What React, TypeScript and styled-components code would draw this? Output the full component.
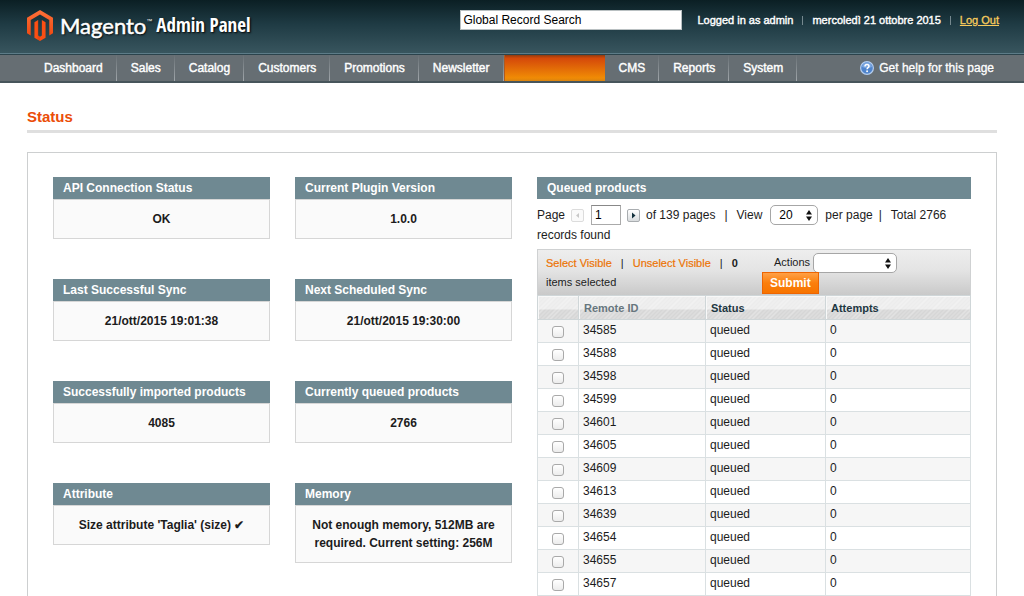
import React from "react";
import styled, { createGlobalStyle, css } from "styled-components";

const GlobalStyle = createGlobalStyle`
  *, *::before, *::after { box-sizing: border-box; }
  body {
    margin: 0;
    background: #fff;
    color: #1c1c1c;
    font: 12px/18px "Liberation Sans", Arial, sans-serif;
  }
  button, input, select { font-family: inherit; margin: 0; }
`;

const Page = styled.div`
  display: flex;
  flex-direction: column;
  min-height: 100vh;
`;

/* ---------- header ---------- */

const Header = styled.header`
  display: flex;
  justify-content: space-between;
  align-items: flex-start;
  height: 55px;
  padding: 10px 25px 0 27px;
  background: linear-gradient(#0b1f24, #1f3b44 45%, #39565f);
  border-bottom: 1px solid #2b434c;
  box-shadow: inset 0 -1px #5d7c88;
`;

const Brand = styled.a`
  display: flex;
  align-items: center;
  height: 31px;
  color: #fff;
  text-decoration: none;
  text-shadow: 1px 1px 2px #000;
`;

const BrandName = styled.span`
  margin-left: 7px;
  font: 22px/31px Lato, sans-serif;
  -webkit-text-stroke: 0.5px #fff;
`;

const Trademark = styled.span`
  align-self: flex-start;
  margin-top: 6px;
  font-size: 6px;
  line-height: 10px;
`;

const BrandSection = styled.span`
  margin-left: 4px;
  font: bold 19px/31px "Liberation Sans Narrow", "Open Sans Condensed", "Liberation Sans", sans-serif;
`;

const HeaderTools = styled.div`
  display: flex;
  align-items: center;
  height: 20px;
  color: #fff;
  font-size: 11px;
`;

const SearchInput = styled.input`
  width: 222px;
  height: 20px;
  margin-right: 15px;
  padding: 0 2px;
  border: 1px solid #b9c0c2;
  border-radius: 0;
  background: #fff;
  color: #000;
  font-size: 12px;
`;

const Strong = styled.span`
  -webkit-text-stroke: 0.4px currentColor;
`;

const HeaderDivider = styled.span`
  width: 1px;
  height: 9px;
  margin: 0 9px;
  background: #76898f;
`;

const LogOut = styled.a`
  color: #f8cc5c;
  -webkit-text-stroke: 0.3px currentColor;
`;

/* ---------- navigation ---------- */

const Nav = styled.nav`
  display: flex;
  justify-content: space-between;
  height: 28px;
  padding: 0 30px;
  background: #666e73;
  border-bottom: 2px solid #47555b;
`;

const NavList = styled.ul`
  display: flex;
  margin: 0;
  padding: 0;
  list-style: none;
`;

const NavItem = styled.li<{ $active?: boolean }>`
  display: flex;
  border-right: 1px solid;
  border-image: linear-gradient(#666e73, #a3a9ad) 1;
  ${(p) =>
    p.$active &&
    css`
      width: 101px;
      border: 0;
      background: linear-gradient(#8f3c10, #d4480a 12%, #f08b05 88%, #d98310);
      box-shadow: inset 1px 0 #b05a20;
    `}
`;

const NavLink = styled.a`
  flex: 1;
  padding: 0 13px 0 14px;
  color: #fff;
  line-height: 26px;
  text-decoration: none;
  -webkit-text-stroke: 0.4px #fff;
`;

const HelpLink = styled.a`
  display: flex;
  align-items: center;
  gap: 5px;
  color: #fff;
  line-height: 26px;
  text-decoration: none;
  -webkit-text-stroke: 0.3px #fff;
`;

/* ---------- content ---------- */

const Main = styled.main`
  display: flex;
  flex: 1;
  flex-direction: column;
  padding: 24px 27px 0;
`;

const Title = styled.h1`
  margin: 0 0 19px;
  padding-bottom: 3px;
  border-bottom: 3px solid #dfdfdf;
  color: #eb4d08;
  font-size: 15px;
  line-height: 20px;
`;

const Panel = styled.div`
  display: grid;
  flex: 1;
  grid-template-columns: minmax(0, 1fr) minmax(0, 1fr) minmax(0, 2fr);
  gap: 25px;
  padding: 24px 25px 0;
  border: 1px solid #cdcfd0;
  border-bottom: 0;
`;

const CardColumn = styled.div`
  display: flex;
  flex-direction: column;
  gap: 40px;
`;

const SectionHead = styled.h2`
  margin: 0;
  padding: 0 10px;
  background: #6f8992;
  color: #fff;
  font-size: 12px;
  line-height: 22px;
`;

const CardBody = styled.div`
  padding: 10px 15px;
  border: 1px solid #d6d6d6;
  background: #fafafa;
  font-weight: bold;
  text-align: center;
`;

/* ---------- queue grid ---------- */

const Pager = styled.div`
  display: flex;
  flex-wrap: wrap;
  align-items: center;
  padding: 6px 0 4px;
  line-height: 20px;
`;

const PageButton = styled.button`
  width: 13px;
  height: 13px;
  padding: 0;
  border: 1px solid #a9adb0;
  border-radius: 2px;
  background: linear-gradient(#fff, #d9dcde);
  line-height: 0;
  color: #12303c;
  &:disabled {
    border-color: #dcdcdc;
    background: #fafafa;
    color: #c8c8c8;
  }
`;

const PageInput = styled.input`
  width: 30px;
  height: 20px;
  margin: 0 6px 0 7px;
  padding: 0 3px;
  border: 1px solid #aaa;
  border-top-color: #888;
  border-radius: 0;
  font-size: 12px;
`;

const PageLabel = styled.label`
  margin-right: 6px;
`;

const Divider = styled.span`
  margin: 0 9px;
`;

const PageCount = styled.span`
  margin-left: 6px;
`;

const Limit = styled.label`
  margin-right: 8px;
`;

const PerPage = styled.span`
  margin: 0 -3px 0 7px;
`;

const SelectBox = styled.span<{ $width: number }>`
  display: grid;
  width: ${(p) => p.$width}px;
  height: 20px;
  > * { grid-area: 1 / 1; }
  > svg {
    align-self: center;
    justify-self: end;
    margin-right: 6px;
    pointer-events: none;
  }
`;

const Select = styled.select`
  appearance: none;
  width: 100%;
  padding: 0 8px;
  border: 1px solid #a6a6a6;
  border-radius: 5px;
  background: #fff;
  color: #000;
  font-size: 12px;
`;

const MassAction = styled.div`
  display: flex;
  height: 46px;
  padding: 3px 8px 0;
  border: 1px solid #cfd1d2;
  border-bottom: 0;
  background: linear-gradient(#eeeeee, #e4e4e4 45%, #c9c9c9);
  font-size: 11px;
`;

const Selection = styled.div`
  display: flex;
  flex-wrap: wrap;
  align-content: flex-start;
  width: 216px;
  padding-top: 1px;
  line-height: 19px;
`;

const Toggle = styled.a`
  color: #ec7405;
  text-decoration: none;
  -webkit-text-stroke: 0.2px currentColor;
`;

const FullLine = styled.span`
  flex-basis: 100%;
`;

const ActionForm = styled.form`
  display: flex;
  flex-direction: column;
  align-items: flex-start;
`;

const ActionField = styled.div`
  display: flex;
  gap: 3px;
  height: 19px;
  padding-left: 12px;
`;

const Submit = styled.button`
  height: 22px;
  padding: 0 7px;
  border: 1px solid #ed6502;
  background: linear-gradient(#ffa046, #fb7f0c 50%, #f77400);
  color: #fff;
  font-size: 12px;
  font-weight: bold;
  line-height: 18px;
`;

const Table = styled.table`
  width: 100%;
  table-layout: fixed;
  border-collapse: collapse;
  border: 1px solid #cfd6d8;
`;

const HeadCell = styled.th<{ $muted?: boolean; $width?: string }>`
  width: ${(p) => p.$width ?? "auto"};
  height: 24px;
  padding: 0 5px;
  border: 1px solid #cfd6d8;
  background:
    repeating-linear-gradient(135deg, rgba(255, 255, 255, 0.35) 0 1px, transparent 1px 3px),
    linear-gradient(#ececec 55%, #d6d6d6 55%);
  box-shadow: inset 1px 1px #f8f8f8;
  color: ${(p) => (p.$muted ? "#67767e" : "#1e3742")};
  font-size: 11px;
  text-align: left;
`;

const Row = styled.tr`
  background: #fff;
  &:nth-child(odd) { background: #f6f6f6; }
`;

const Cell = styled.td<{ $center?: boolean }>`
  height: 23px;
  padding: 0 4px 2px;
  border: 1px solid #dae0e2;
  text-align: ${(p) => (p.$center ? "center" : "left")};
  line-height: 20px;
`;

const Checkbox = styled.input`
  appearance: none;
  display: block;
  width: 12px;
  height: 12px;
  margin: 3px auto 0;
  border: 1px solid #a9a9a9;
  border-radius: 3px;
  background: linear-gradient(#fff, #ececec);
  &:checked { background: #6f8992; }
`;

const navBefore = ["Dashboard", "Sales", "Catalog", "Customers", "Promotions", "Newsletter"];
const navAfter = ["CMS", "Reports", "System"];

const cardColumns = [
  [
    ["API Connection Status", "OK"],
    ["Last Successful Sync", "21/ott/2015 19:01:38"],
    ["Successfully imported products", "4085"],
    ["Attribute", "Size attribute 'Taglia' (size) ✔"],
  ],
  [
    ["Current Plugin Version", "1.0.0"],
    ["Next Scheduled Sync", "21/ott/2015 19:30:00"],
    ["Currently queued products", "2766"],
    ["Memory", "Not enough memory, 512MB are required. Current setting: 256M"],
  ],
];

const queue = [
  34585, 34588, 34598, 34599, 34601, 34605, 34609, 34613, 34639, 34654, 34655, 34657,
].map((id) => ({ id, status: "queued", attempts: 0 }));

const Logo = () => (
  <svg width="26" height="31" viewBox="1.6 0 20.8 24" preserveAspectRatio="none" aria-hidden="true">
    <defs>
      <linearGradient id="flame" x1="0" y1="0" x2="0" y2="1">
        <stop offset="0" stopColor="#ff7038" />
        <stop offset="1" stopColor="#f04a12" />
      </linearGradient>
    </defs>
    <path
      fill="url(#flame)"
      d="M22.391 6v12l-2.969 1.714V7.713L12 3.43 4.574 7.713v12.001L1.609 18V6L12 0l10.391 6z"
    />
    <path
      fill="#fb4f14"
      d="M12 24l-4.455-2.572v-12l2.97-1.715v12.001l1.485.902 1.485-.902V7.713l2.971 1.715v12L12 24z"
    />
    <path fill="#c93a0c" d="M10.515 7.713v12.001l1.485.902V24l-1.9-1.1V8z" opacity="0.35" />
  </svg>
);

const HelpIcon = () => (
  <svg width="14" height="14" viewBox="0 0 14 14" aria-hidden="true">
    <circle cx="7" cy="7" r="6.4" fill="#4f84cc" stroke="#b4cdee" strokeWidth="1.2" />
    <path d="M2 6a5 4.4 0 0 1 10 0q-5 2-10 0z" fill="#7ba6df" />
    <path
      d="M5 5.4C5 4.2 5.9 3.5 7 3.5s2 .7 2 1.8c0 1.3-1.9 1.4-1.9 2.9"
      fill="none"
      stroke="#fff"
      strokeWidth="1.5"
    />
    <circle cx="7.1" cy="10.2" r="0.95" fill="#fff" />
  </svg>
);

const UpDown = () => (
  <svg width="6" height="11" viewBox="0 0 6 11" aria-hidden="true">
    <path d="M3 0l3 4.5H0zM3 11l3-4.5H0z" fill="#111" />
  </svg>
);

const Arrow = ({ left }: { left?: boolean }) => (
  <svg width="11" height="11" viewBox="0 0 11 11" aria-hidden="true">
    <path d={left ? "M7 3v5L4 5.5z" : "M4 2.5v6l3.5-3z"} fill="currentColor" />
  </svg>
);

export default function App() {
  return (
    <Page>
      <GlobalStyle />
      <Header>
        <Brand href="#">
          <Logo />
          <BrandName>Magento</BrandName>
          <Trademark>™</Trademark>
          <BrandSection>Admin Panel</BrandSection>
        </Brand>
        <HeaderTools>
          <SearchInput aria-label="Search" defaultValue="Global Record Search" />
          <Strong>Logged in as admin</Strong>
          <HeaderDivider />
          <Strong>mercoledì 21 ottobre 2015</Strong>
          <HeaderDivider />
          <LogOut href="#">Log Out</LogOut>
        </HeaderTools>
      </Header>
      <Nav>
        <NavList>
          {navBefore.map((label) => (
            <NavItem key={label}>
              <NavLink href="#">{label}</NavLink>
            </NavItem>
          ))}
          <NavItem $active />
          {navAfter.map((label) => (
            <NavItem key={label}>
              <NavLink href="#">{label}</NavLink>
            </NavItem>
          ))}
        </NavList>
        <HelpLink href="#">
          <HelpIcon />
          Get help for this page
        </HelpLink>
      </Nav>
      <Main>
        <Title>Status</Title>
        <Panel>
          {cardColumns.map((cards, i) => (
            <CardColumn key={i}>
              {cards.map(([title, value]) => (
                <section key={title}>
                  <SectionHead>{title}</SectionHead>
                  <CardBody>{value}</CardBody>
                </section>
              ))}
            </CardColumn>
          ))}
          <section>
            <SectionHead>Queued products</SectionHead>
            <Pager>
              <PageLabel htmlFor="page">Page</PageLabel>
              <PageButton type="button" disabled aria-label="Previous page">
                <Arrow left />
              </PageButton>
              <PageInput id="page" defaultValue="1" />
              <PageButton type="button" aria-label="Next page">
                <Arrow />
              </PageButton>
              <PageCount>of 139 pages</PageCount>
              <Divider>|</Divider>
              <Limit htmlFor="limit">View</Limit>
              <SelectBox $width={48}>
                <Select id="limit" defaultValue="20">
                  <option>20</option>
                  <option>50</option>
                </Select>
                <UpDown />
              </SelectBox>
              <PerPage>per page</PerPage>
              <Divider>|</Divider>
              <span>Total 2766</span>
              <FullLine>records found</FullLine>
            </Pager>
            <MassAction>
              <Selection>
                <Toggle href="#">Select Visible</Toggle>
                <Divider>|</Divider>
                <Toggle href="#">Unselect Visible</Toggle>
                <Divider>|</Divider>
                <b>0</b>
                <FullLine>items selected</FullLine>
              </Selection>
              <ActionForm onSubmit={(e) => e.preventDefault()}>
                <ActionField>
                  <label htmlFor="action">Actions</label>
                  <SelectBox $width={84}>
                    <Select id="action">
                      <option></option>
                    </Select>
                    <UpDown />
                  </SelectBox>
                </ActionField>
                <Submit>Submit</Submit>
              </ActionForm>
            </MassAction>
            <Table>
              <thead>
                <tr>
                  <HeadCell $width="41px" aria-label="Select" />
                  <HeadCell $width="127px" $muted>Remote ID</HeadCell>
                  <HeadCell $width="120px">Status</HeadCell>
                  <HeadCell>Attempts</HeadCell>
                </tr>
              </thead>
              <tbody>
                {queue.map((item) => (
                  <Row key={item.id}>
                    <Cell $center>
                      <Checkbox type="checkbox" aria-label={`Select ${item.id}`} />
                    </Cell>
                    <Cell>{item.id}</Cell>
                    <Cell>{item.status}</Cell>
                    <Cell>{item.attempts}</Cell>
                  </Row>
                ))}
              </tbody>
            </Table>
          </section>
        </Panel>
      </Main>
    </Page>
  );
}
